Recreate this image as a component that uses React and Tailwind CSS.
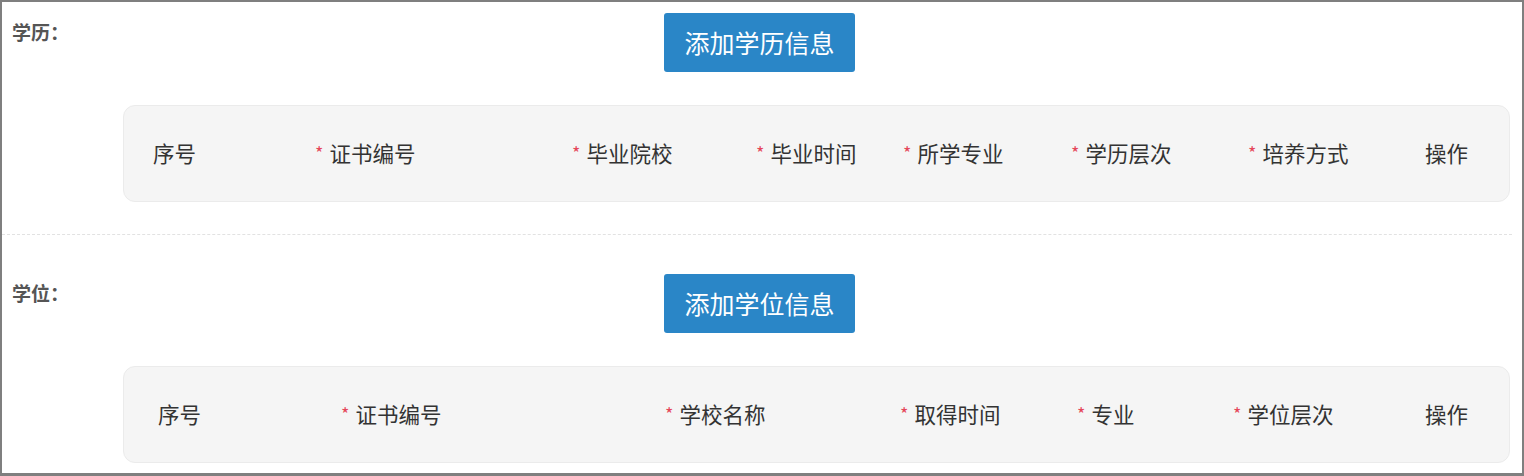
import React from "react";

const font = { fontFamily: '"Noto Sans CJK SC", "Noto Sans", sans-serif' };

function Col({ w, req, children }) {
  return (
    <div className={`flex items-center shrink-0 ${w}`}>
      {req && <span className="text-[#e5475a] text-[18px] mr-[6px] relative -top-[2px] leading-none">*</span>}
      <span>{children}</span>
    </div>
  );
}

function Section({ label, btn, cols, pl }) {
  return (
    <div className="flex">
      <div className="w-[111px] shrink-0 pt-[6px] text-[19px] font-bold text-[#555] leading-[26px]">{label}</div>
      <div className="flex-1 flex flex-col">
        <div className="pl-[541px]">
          <button className="w-[191px] h-[59px] rounded-[3px] bg-[#2a86c7] text-white text-[25px] leading-none">
            {btn}
          </button>
        </div>
        <div className={`mt-[33px] w-[1387px] h-[97px] rounded-[12px] bg-[#f5f5f5] border border-[#ebebeb] flex items-center text-[21.5px] text-[#333] ${pl}`}>
          {cols}
        </div>
      </div>
    </div>
  );
}

export default function App() {
  return (
    <div style={font} className="w-[1524px] h-[476px] bg-white border-l-2 border-r-2 border-t-2 border-b-[3px] border-[#7f7f7f] overflow-hidden">
      <div className="pl-[10px] pt-[11px]">
        <Section
          label="学历："
          btn="添加学历信息"
          pl="pl-[29px]"
          cols={
            <>
              <Col w="w-[162px]">序号</Col>
              <Col w="w-[257px]" req>证书编号</Col>
              <Col w="w-[184px]" req>毕业院校</Col>
              <Col w="w-[147px]" req>毕业时间</Col>
              <Col w="w-[168px]" req>所学专业</Col>
              <Col w="w-[177px]" req>学历层次</Col>
              <Col w="w-[177px]" req>培养方式</Col>
              <Col w="w-[80px]">操作</Col>
            </>
          }
        />
      </div>
      <div className="mt-[32px] border-t border-dashed border-[#e2e2e2] w-[1510px]"></div>
      <div className="pl-[10px] pt-[39px]">
        <Section
          label="学位："
          btn="添加学位信息"
          pl="pl-[34px]"
          cols={
            <>
              <Col w="w-[183px]">序号</Col>
              <Col w="w-[324px]" req>证书编号</Col>
              <Col w="w-[235px]" req>学校名称</Col>
              <Col w="w-[177px]" req>取得时间</Col>
              <Col w="w-[156px]" req>专业</Col>
              <Col w="w-[192px]" req>学位层次</Col>
              <Col w="w-[80px]">操作</Col>
            </>
          }
        />
      </div>
    </div>
  );
}
